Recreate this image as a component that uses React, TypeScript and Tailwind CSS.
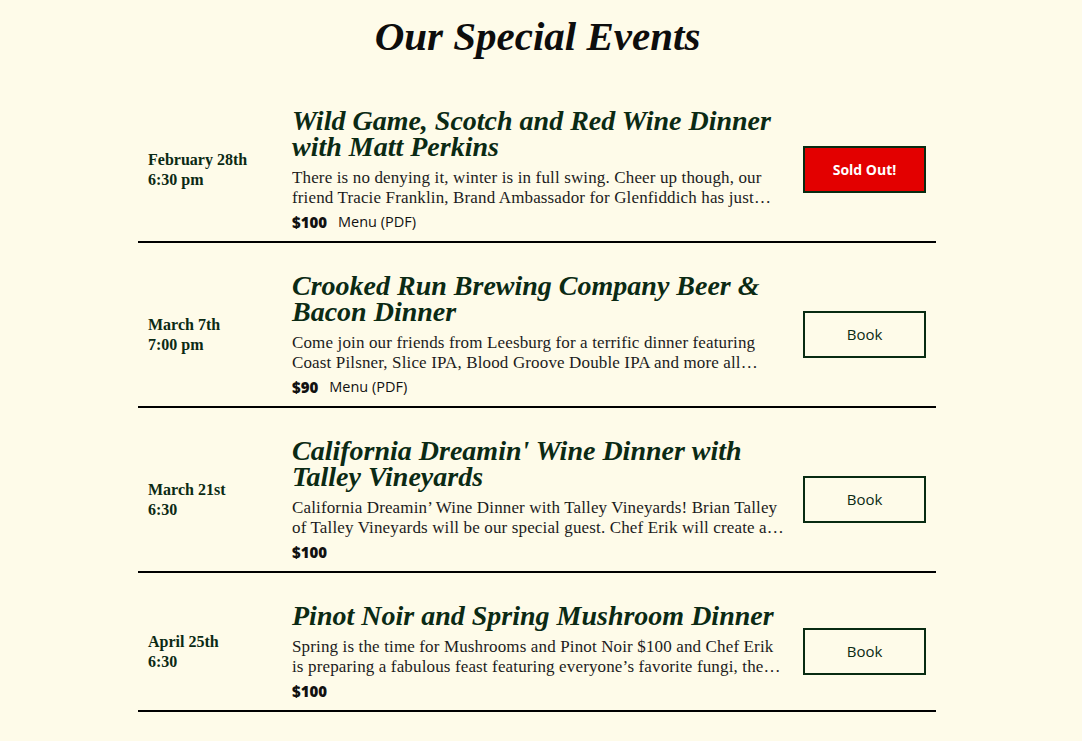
const events = [
  {
    date: 'February 28th',
    time: '6:30 pm',
    title: 'Wild Game, Scotch and Red Wine Dinner with Matt Perkins',
    blurb:
      'There is no denying it, winter is in full swing. Cheer up though, our friend Tracie Franklin, Brand Ambassador for Glenfiddich has just teamed up with Chef Erik for an evening of game and whisky.',
    price: '$100',
    menu: true,
    soldOut: true,
  },
  {
    date: 'March 7th',
    time: '7:00 pm',
    title: 'Crooked Run Brewing Company Beer & Bacon Dinner',
    blurb:
      'Come join our friends from Leesburg for a terrific dinner featuring Coast Pilsner, Slice IPA, Blood Groove Double IPA and more all paired with bacon courses.',
    price: '$90',
    menu: true,
    soldOut: false,
  },
  {
    date: 'March 21st',
    time: '6:30',
    title: "California Dreamin' Wine Dinner with Talley Vineyards",
    blurb:
      'California Dreamin’ Wine Dinner with Talley Vineyards! Brian Talley of Talley Vineyards will be our special guest. Chef Erik will create a menu to match.',
    price: '$100',
    menu: false,
    soldOut: false,
  },
  {
    date: 'April 25th',
    time: '6:30',
    title: 'Pinot Noir and Spring Mushroom Dinner',
    blurb:
      'Spring is the time for Mushrooms and Pinot Noir $100 and Chef Erik is preparing a fabulous feast featuring everyone’s favorite fungi, the morel and many more.',
    price: '$100',
    menu: false,
    soldOut: false,
  },
];

const serif = "font-['Liberation_Serif',serif]";
const sans = "font-['Open_Sans',sans-serif]";

function EventRow({ ev }: { ev: (typeof events)[number] }) {
  return (
    <div className="flex items-center border-b-2 border-black pt-[30px] pb-[10px]">
      <div className={`${serif} w-[154px] shrink-0 pl-[10px] text-[16px] font-bold leading-[20px] text-[#0b2a14]`}>
        <div>{ev.date}</div>
        <div>{ev.time}</div>
      </div>
      <div className="w-[493px] shrink-0">
        <h2 className={`${serif} text-[28px] font-bold italic leading-[26px] text-[#0b2a14]`}>
          {ev.title}
        </h2>
        <p className={`${serif} mt-[8px] line-clamp-2 text-[17px] leading-[20px] tracking-[0.14px] text-[#1c1c1c]`}>
          {ev.blurb}
        </p>
        <div className={`${sans} mt-[5px] flex items-center gap-[11px] leading-[18px] text-[#111]`}>
          <span className="text-[15px] font-extrabold">{ev.price}</span>
          {ev.menu && <span className="text-[14.5px]">Menu (PDF)</span>}
        </div>
      </div>
      <div className="ml-[18px]">
        {ev.soldOut ? (
          <button className={`${sans} h-[47px] w-[123px] border-2 border-[#082b12] bg-[#e30000] text-[14px] font-bold text-white`}>
            Sold Out!
          </button>
        ) : (
          <button className={`${sans} h-[47px] w-[123px] border-2 border-[#082b12] text-[15px] text-[#0b2a14]`}>
            Book
          </button>
        )}
      </div>
    </div>
  );
}

export default function App() {
  return (
    <div className="min-h-screen bg-[#fefbe9] pt-[14px]">
      <h1 className={`${serif} pr-[7px] text-center text-[41px] font-bold italic leading-[44px] text-[#0d0d0d]`}>
        Our Special Events
      </h1>
      <div className="ml-[138px] mt-[20px] w-[798px]">
        {events.map(ev => (
          <EventRow key={ev.title} ev={ev} />
        ))}
      </div>
    </div>
  );
}
